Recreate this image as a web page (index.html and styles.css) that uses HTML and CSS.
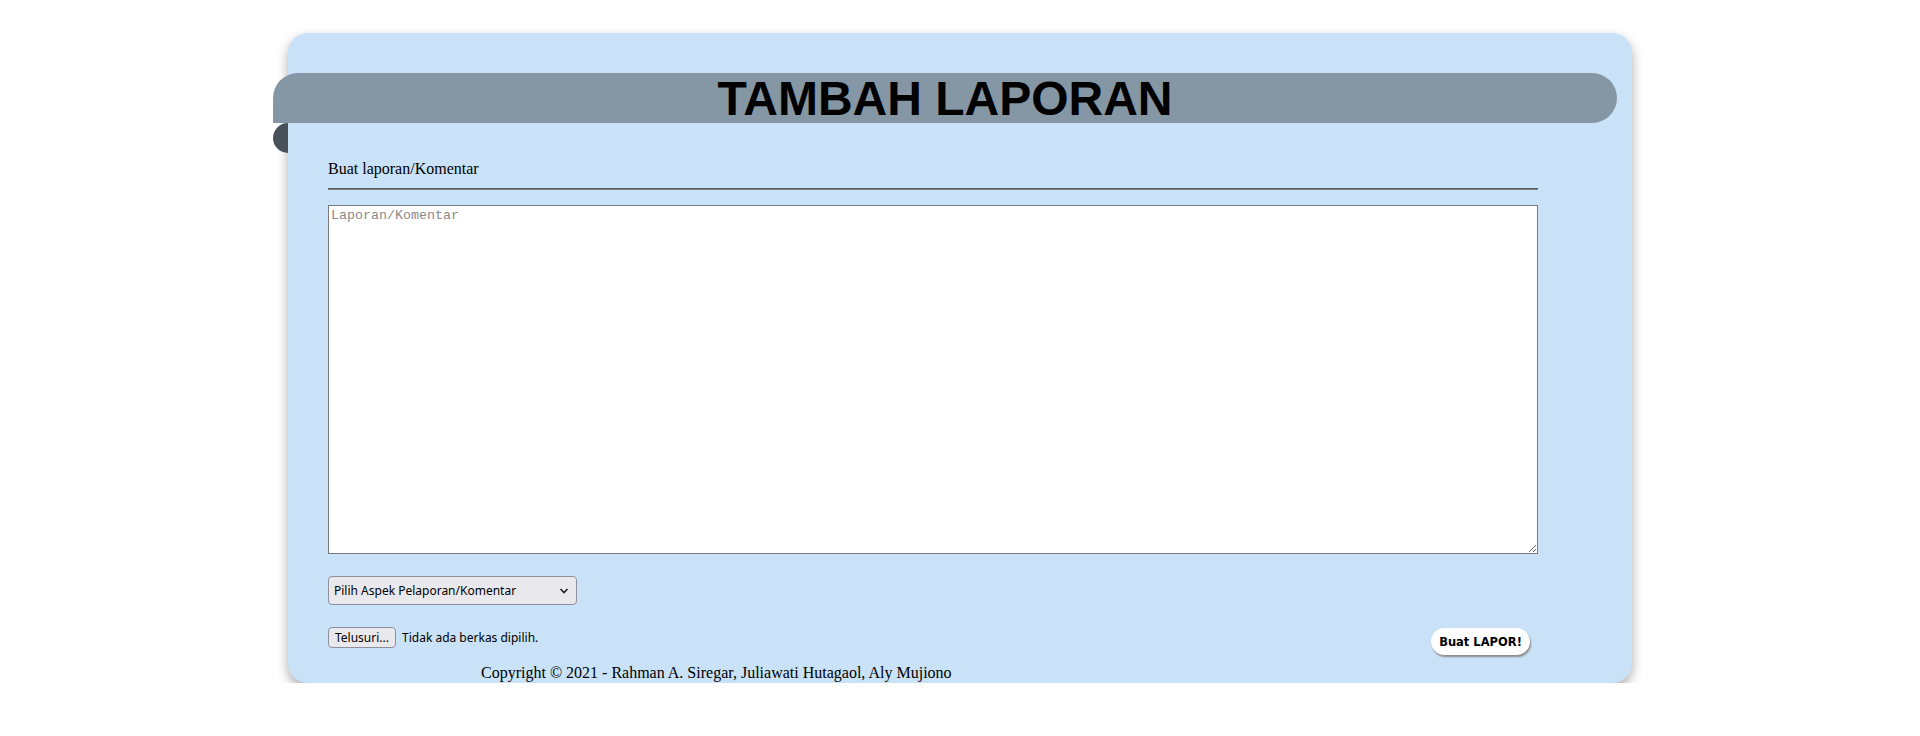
FILE: index.html
```html
<!DOCTYPE html>
<html lang="id">
<head>
<meta charset="utf-8">
<title>Tambah Laporan</title>
<link rel="stylesheet" href="styles.css">
</head>
<body>
<div class="card">
  <div class="banner">
    <h1 class="title">TAMBAH LAPORAN</h1>
  </div>
  <div class="content">
    <div class="label">Buat laporan/Komentar</div>
    <hr class="rule">
    <textarea class="report" placeholder="Laporan/Komentar"></textarea>
    <div class="select-row">
      <div class="select">
        <span>Pilih Aspek Pelaporan/Komentar</span>
        <svg class="chev" width="10" height="6" viewBox="0 0 10 6"><path d="M1.5 1 L5 4.5 L8.5 1" fill="none" stroke="#222" stroke-width="1.6"/></svg>
      </div>
    </div>
    <div class="file-row">
      <div class="file">
        <span class="file-btn">Telusuri...</span>
        <span class="file-text">Tidak ada berkas dipilih.</span>
      </div>
      <span class="submit">Buat LAPOR!</span>
    </div>
  </div>
  <div class="footer">Copyright © 2021 - Rahman A. Siregar, Juliawati Hutagaol, Aly Mujiono</div>
</div>
</body>
</html>
```

FILE: styles.css
```css
html, body {
  margin: 0;
  padding: 0;
  background: #ffffff;
}
body {
  font-family: "Liberation Serif", "Times New Roman", serif;
  font-size: 16px;
  color: #000;
}
.card {
  width: 1344px;
  margin: 33px auto 0;
  background: #c9e2f7;
  border-radius: 20px;
  box-shadow: 0 5px 12px rgba(0, 0, 0, 0.33);
  padding: 40px 0 1px 0;
  box-sizing: border-box;
}
.banner {
  position: relative;
  width: 1344px;
  height: 50px;
  margin-left: -15px;
  background: #8596a4;
  border-radius: 25px 25px 25px 0;
  display: flex;
  align-items: center;
  justify-content: center;
}
.banner::after {
  content: "";
  position: absolute;
  left: 0;
  top: 50px;
  width: 15px;
  height: 30px;
  background: #48515a;
  border-radius: 15px 0 0 15px;
}
.title {
  margin: 0;
  font-family: "Liberation Sans", Arial, sans-serif;
  font-weight: bold;
  font-size: 48px;
  line-height: 50px;
  position: relative;
  top: 1px;
}
.content {
  padding-left: 40px;
  width: 1210px;
}
.label {
  margin-top: 37px;
  line-height: 18px;
}
.rule {
  margin: 10px 0 0 0;
  height: 0;
  border: 0;
  border-top: 1px solid #56595e;
  border-bottom: 1px solid #7d8287;
}
.report {
  display: block;
  box-sizing: border-box;
  width: 1210px;
  height: 349px;
  margin-top: 15px;
  border: 1px solid #7a7a7a;
  background: #fff;
  padding: 2px 2px;
  font-family: "Liberation Mono", "Courier New", monospace;
  font-size: 13.33px;
  resize: both;
}
.report::placeholder {
  color: #8a8a8a;
}
.select-row {
  margin-top: 22px;
}
.select {
  box-sizing: border-box;
  width: 249px;
  height: 29px;
  border: 1px solid #8f8f9d;
  border-radius: 4px;
  background: #e9e9ed;
  display: flex;
  align-items: center;
  justify-content: space-between;
  padding: 0 7px 0 5px;
  font-family: "Noto Sans", "DejaVu Sans", sans-serif;
  font-size: 12px;
  color: #000;
}
.chev {
  display: block;
}
.file-row {
  margin-top: 22px;
  display: flex;
  justify-content: space-between;
  align-items: flex-start;
}
.file {
  display: flex;
  align-items: center;
  font-family: "Noto Sans", "DejaVu Sans", sans-serif;
  font-size: 12px;
}
.file-btn {
  box-sizing: border-box;
  width: 68px;
  height: 21px;
  border: 1px solid #8f8f9d;
  border-radius: 4px;
  background: #e9e9ed;
  display: flex;
  align-items: center;
  justify-content: center;
}
.file-text {
  margin-left: 6px;
}
.submit {
  box-sizing: border-box;
  width: 99px;
  height: 27px;
  margin-top: 1px;
  margin-right: 8px;
  background: #fff;
  border-radius: 14px;
  box-shadow: 1px 2px 2px #8a8a8a;
  display: flex;
  align-items: center;
  justify-content: center;
  font-family: "DejaVu Sans", Verdana, sans-serif;
  font-weight: bold;
  font-size: 11.5px;
}
.footer {
  margin-top: 9px;
  padding-left: 193px;
  line-height: 18px;
}
```
